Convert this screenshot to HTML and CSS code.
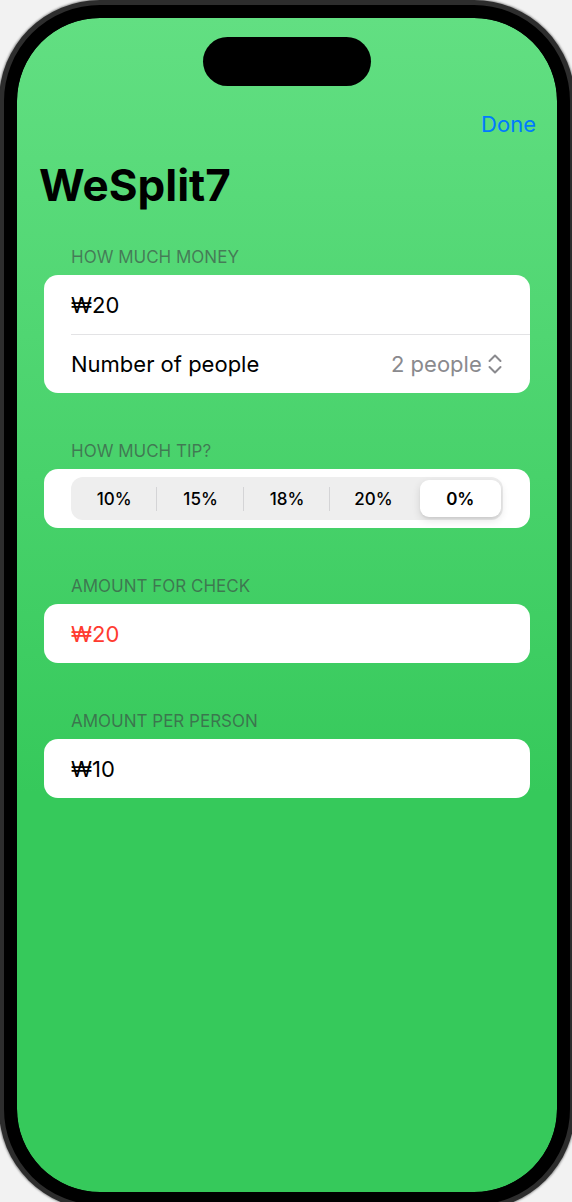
FILE: index.html
```html
<!DOCTYPE html>
<html lang="en">
<head>
<meta charset="utf-8">
<meta name="viewport" content="width=device-width, initial-scale=1">
<title>WeSplit7</title>
<link rel="stylesheet" href="styles.css">
</head>
<body>
<div class="phone">
  <div class="island"></div>
  <header class="toolbar"><button class="done" type="button">Done</button></header>
  <main>
    <h1 class="title">WeSplit7</h1>
    <form class="form">
      <section class="section">
        <h2 class="heading"><label for="amount">HOW MUCH MONEY</label></h2>
        <div class="card">
          <div class="row"><input class="amount" id="amount" type="text" value="₩20"></div>
          <div class="row row-divided">
            <label for="people">Number of people</label>
            <span class="picker">
              <select class="people" id="people"><option>2 people</option></select>
              <svg class="chevrons" viewBox="0 0 14 20" aria-hidden="true"><path d="M1.500 7 7 1.500l5.500 5.500M1.500 13l5.500 5.500 5.500-5.500"/></svg>
            </span>
          </div>
        </div>
      </section>
      <section class="section">
        <h2 class="heading">HOW MUCH TIP?</h2>
        <div class="card">
          <div class="row row-tip">
            <div class="segments" role="radiogroup" aria-label="Tip percentage">
              <label class="segment"><input type="radio" name="tip"><span>10%</span></label>
              <label class="segment"><input type="radio" name="tip"><span>15%</span></label>
              <label class="segment"><input type="radio" name="tip"><span>18%</span></label>
              <label class="segment"><input type="radio" name="tip"><span>20%</span></label>
              <label class="segment"><input type="radio" name="tip" checked><span>0%</span></label>
            </div>
          </div>
        </div>
      </section>
      <section class="section">
        <h2 class="heading">AMOUNT FOR CHECK</h2>
        <div class="card"><div class="row warning">₩20</div></div>
      </section>
      <section class="section">
        <h2 class="heading">AMOUNT PER PERSON</h2>
        <div class="card"><div class="row">₩10</div></div>
      </section>
    </form>
  </main>
</div>
</body>
</html>
```
FILE: styles.css
```css
* { box-sizing: border-box; }
html { background: #f2f2f2; }
body {
  margin: 0;
  height: 100vh;
  overflow: hidden;
  font-family: Inter, "Liberation Sans", sans-serif;
  font-size: 22px;
  line-height: 28px;
  color: #000;
}
.phone {
  min-height: calc(100vh - 2px);
  margin: 5px 2px 0 4px;
  padding-top: 19px;
  border: 13px solid #000;
  border-radius: 96px;
  background: linear-gradient(#62df82, #36c95b 66%) padding-box, #000;
  box-shadow: 0 0 0 5px #2d2d2d, 0 0 2px 6px #999;
}
.island {
  width: 168px;
  height: 49px;
  margin: 0 auto;
  border-radius: 25px;
  background: #000;
}
.toolbar {
  display: flex;
  justify-content: flex-end;
  padding: 24px 21px 0;
}
.done {
  padding: 0;
  border: 0;
  background: none;
  font: inherit;
  color: #007aff;
}
.title {
  margin: 0;
  padding: 20px 22px 0;
  font-size: 44px;
  font-weight: 700;
  line-height: 54px;
}
.form {
  display: grid;
  gap: 47px;
  padding: 34px 27px 0;
}
.heading {
  margin: 0;
  padding: 0 27px 7px;
  font-size: 17px;
  font-weight: 400;
  line-height: 22px;
  color: rgba(60, 60, 67, 0.6);
}
.card {
  border-radius: 14px;
  background: #fff;
  overflow: hidden;
}
.row {
  display: flex;
  align-items: center;
  justify-content: space-between;
  height: 59px;
  padding: 0 27px;
}
.row-divided {
  margin-left: 27px;
  padding-left: 0;
  border-top: 1px solid #e3e3e5;
}
.warning { color: #ff3b30; }
.amount {
  width: 100%;
  padding: 0;
  border: 0;
  outline: 0;
  background: none;
  font: inherit;
  color: inherit;
}
.picker {
  display: flex;
  align-items: center;
  gap: 6px;
  color: #8a8a8e;
}
.people {
  appearance: none;
  padding: 0;
  border: 0;
  background: none;
  font: inherit;
  color: inherit;
}
.chevrons {
  width: 14px;
  height: 20px;
  margin-right: 1px;
  fill: none;
  stroke: currentColor;
  stroke-width: 2;
  stroke-linecap: round;
  stroke-linejoin: round;
}
.segments {
  flex: 1;
  display: grid;
  grid-template-columns: repeat(5, 1fr);
  height: 43px;
  padding: 3px 0;
  border-radius: 12px;
  background: #eee;
}
.segment {
  position: relative;
  display: flex;
  align-items: center;
  justify-content: center;
  border-radius: 9px;
  font-size: 17px;
  font-weight: 500;
}
.segment input {
  position: absolute;
  inset: 0;
  margin: 0;
  opacity: 0;
}
.segment::after {
  content: "";
  position: absolute;
  right: 0;
  width: 1px;
  height: 24px;
  background: #d4d4d6;
}
.segment:nth-last-child(-n+2)::after { display: none; }
.segment:has(:checked) {
  margin: 0 2px 0 3px;
  background: #fff;
  font-weight: 600;
  box-shadow: 0 3px 8px rgba(0, 0, 0, 0.12), 0 2px 2px rgba(0, 0, 0, 0.05);
}
```
